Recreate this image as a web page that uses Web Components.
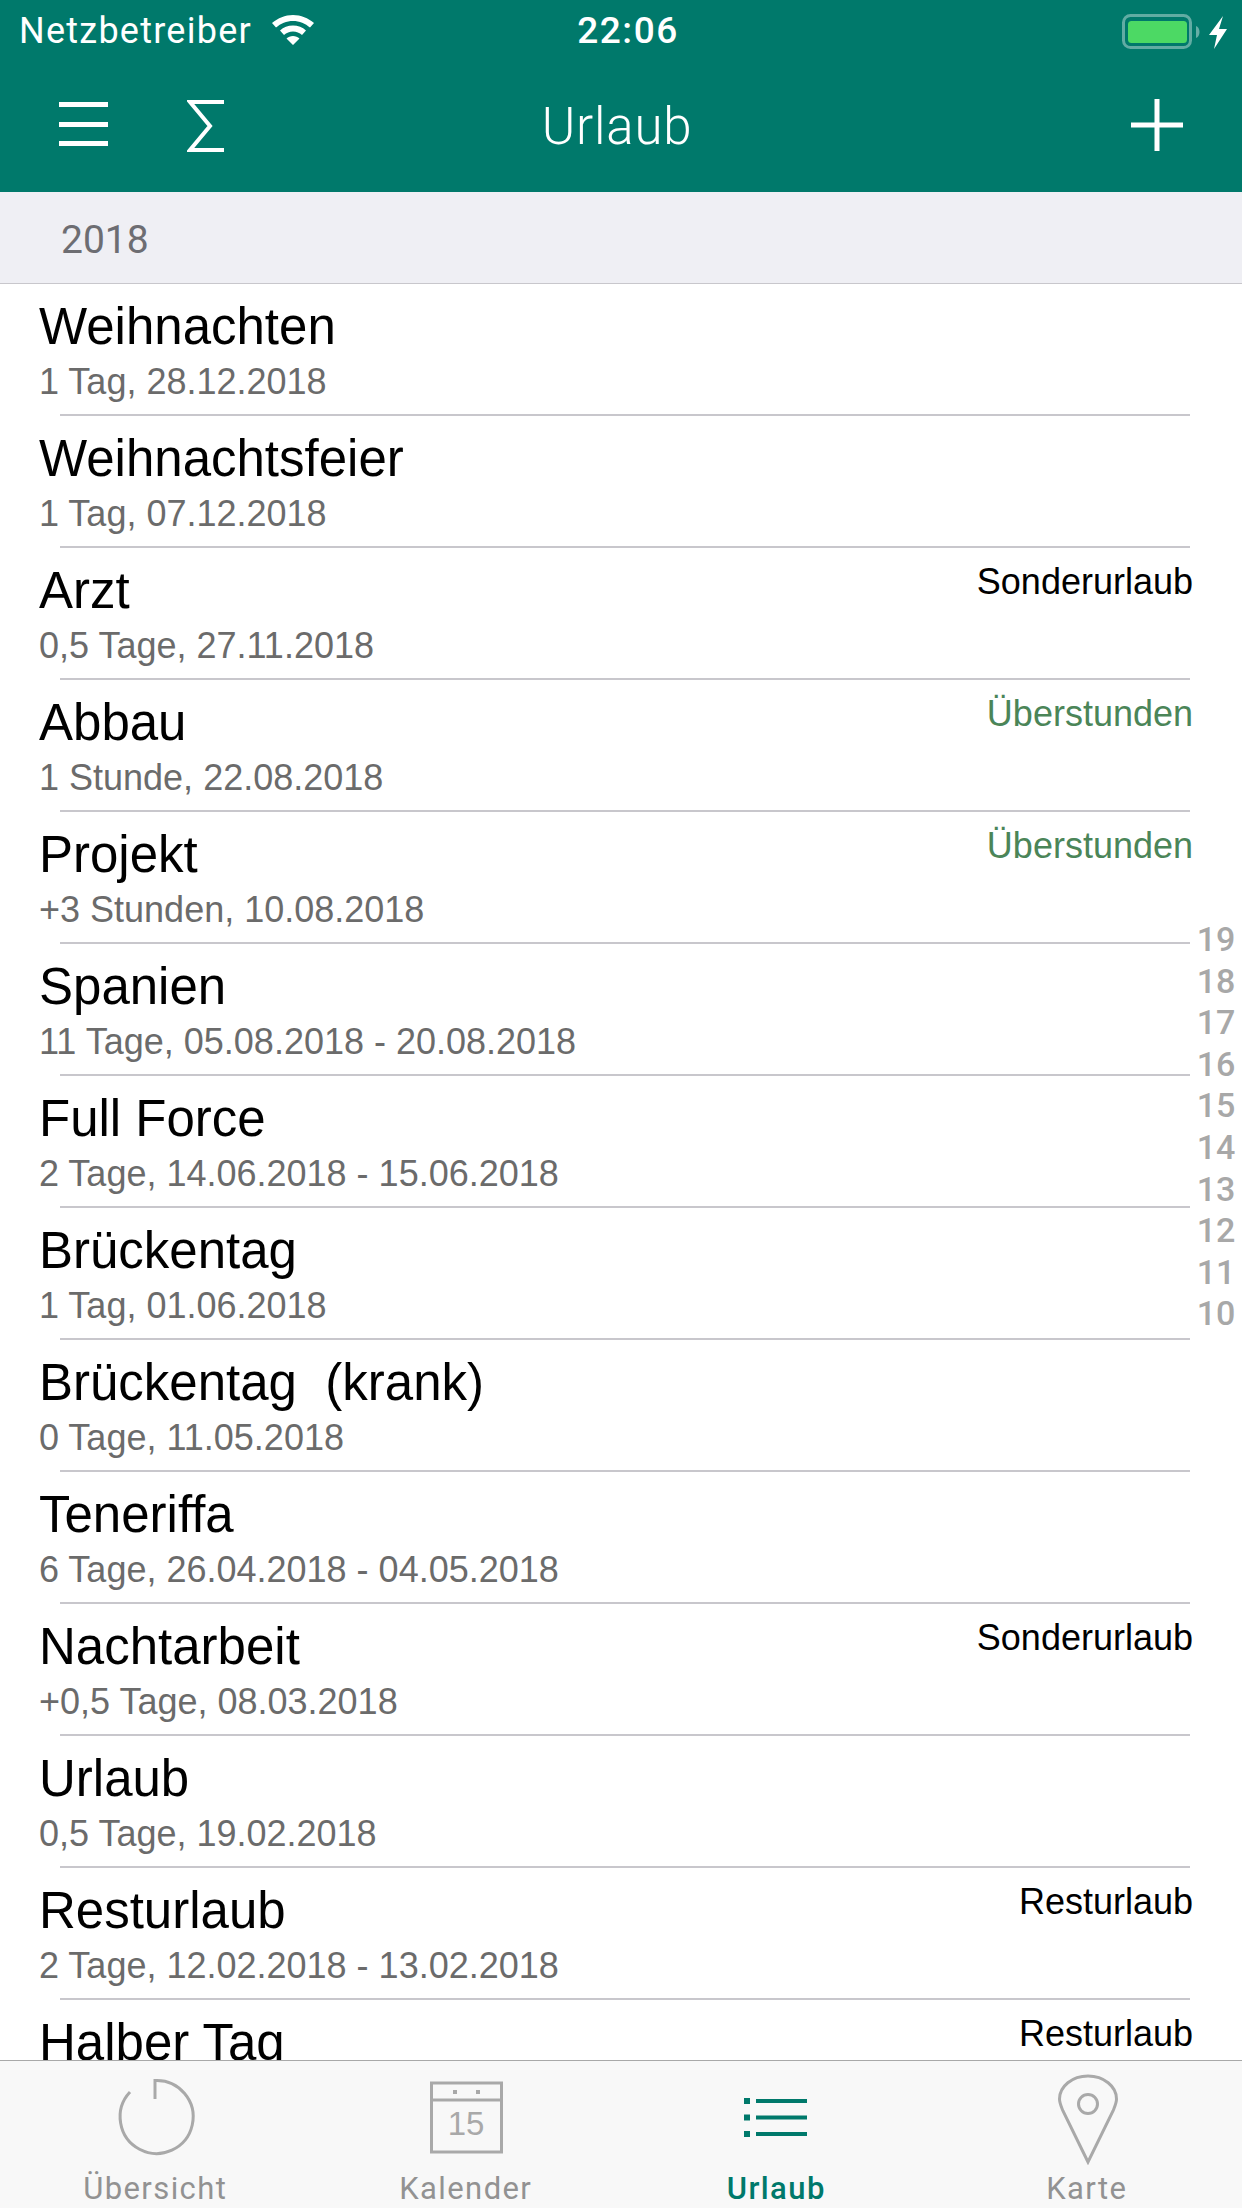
<!doctype html>
<html lang="de"><head><meta charset="utf-8">
<style>
html,body{margin:0;padding:0;background:#fff}
body{width:1242px;height:2208px;overflow:hidden;font-family:"Liberation Sans",sans-serif}
</style></head><body>
<app-shell>
  <status-bar slot="top"></status-bar>
  <nav-bar slot="top" title="Urlaub"></nav-bar>
  <section-head slot="top">2018</section-head>
  <leave-row t="Weihnachten" s="1 Tag, 28.12.2018"></leave-row>
  <leave-row t="Weihnachtsfeier" s="1 Tag, 07.12.2018"></leave-row>
  <leave-row t="Arzt" s="0,5 Tage, 27.11.2018" tag="Sonderurlaub"></leave-row>
  <leave-row t="Abbau" s="1 Stunde, 22.08.2018" tag="Überstunden" green></leave-row>
  <leave-row t="Projekt" s="+3 Stunden, 10.08.2018" tag="Überstunden" green></leave-row>
  <leave-row t="Spanien" s="11 Tage, 05.08.2018 - 20.08.2018"></leave-row>
  <leave-row t="Full Force" s="2 Tage, 14.06.2018 - 15.06.2018"></leave-row>
  <leave-row t="Brückentag" s="1 Tag, 01.06.2018"></leave-row>
  <leave-row t="Brückentag  (krank)" s="0 Tage, 11.05.2018"></leave-row>
  <leave-row t="Teneriffa" s="6 Tage, 26.04.2018 - 04.05.2018"></leave-row>
  <leave-row t="Nachtarbeit" s="+0,5 Tage, 08.03.2018" tag="Sonderurlaub"></leave-row>
  <leave-row t="Urlaub" s="0,5 Tage, 19.02.2018"></leave-row>
  <leave-row t="Resturlaub" s="2 Tage, 12.02.2018 - 13.02.2018" tag="Resturlaub"></leave-row>
  <leave-row t="Halber Tag" s="" tag="Resturlaub"></leave-row>
  <year-index slot="over"></year-index>
  <tab-bar slot="bottom"></tab-bar>
</app-shell>
<script>
const def=(name,css,html)=>{customElements.define(name,class extends HTMLElement{
  connectedCallback(){ if(this.shadowRoot)return; const r=this.attachShadow({mode:"open"});
    r.innerHTML=`<style>${css}</style>${typeof html==="function"?html(this):html}`; }
});};
def("app-shell",`
:host{display:flex;flex-direction:column;width:1242px;height:2208px;overflow:hidden}
.list{position:relative;flex:1;min-height:0;overflow:hidden}
.over{position:absolute;inset:0;pointer-events:none}
`,`<slot name="top"></slot><div class="list"><slot></slot><div class="over"><slot name="over"></slot></div></div><slot name="bottom"></slot>`);
def("status-bar",`
:host{display:flex;align-items:center;height:64px;background:#00796b;color:#fff;position:relative;font-family:Roboto,sans-serif}
.l{display:flex;align-items:center;padding-left:19px;font-size:36px;line-height:40px;gap:20px;flex:1;letter-spacing:1.250px;margin-top:-2px}
.c{position:absolute;left:0;right:0;text-align:center;top:11px;font-size:37px;line-height:40px;font-weight:500;padding-left:14px;letter-spacing:1.500px}
.r{display:flex;align-items:center;padding-right:15px}
svg{display:block}
.l svg{margin-top:-3px}
`,`<div class="l"><span>Netzbetreiber</span>
<svg width="42" height="30" viewBox="0 0 42 30"><path fill="#fff" d="M21 0C13 0 6 3 0 8l4 4.600C8.700 8.500 14.500 6 21 6s12.300 2.500 17 6.600L42 8C36 3 29 0 21 0zM21 10.500c-5 0-9.500 1.800-13 5l4 4.500c2.500-2.200 5.500-3.500 9-3.500s6.500 1.300 9 3.500l4-4.500c-3.500-3.200-8-5-13-5zM21 21c-2.500 0-4.800.9-6.500 2.500L21 30l6.500-6.500C25.800 21.900 23.500 21 21 21z"/></svg></div>
<div class="c">22:06</div>
<div class="r"><svg width="105" height="36" viewBox="0 0 105 36">
<rect x="1.500" y="1.500" width="67" height="32" rx="7" fill="none" stroke="#fff" stroke-opacity=".38" stroke-width="3"/>
<rect x="6" y="7" width="59" height="22" rx="3.500" fill="#4cd964"/>
<path d="M74 12c2 .6 3.500 3 3.500 6s-1.500 5.400-3.500 6z" fill="#fff" fill-opacity=".4"/>
<path d="M101 2 87 21h8l-3 14 13-20h-8z" fill="#fff"/></svg></div>`);
def("nav-bar",`
:host{display:block;height:128px;background:#00796b;color:#fff;position:relative}
.row{display:flex;align-items:flex-start;height:100%}
.h{margin:38px 0 0 59px;width:49px;height:44px;display:flex;flex-direction:column;justify-content:space-between}
.h i{display:block;height:5px;background:#fff}
.s{margin:35px 0 0 79px;display:block}
.t{position:absolute;left:0;right:0;top:29px;text-align:center;font:300 51px/68px Roboto,sans-serif;margin-left:-8px;letter-spacing:.8px}
.p{margin:35px 0 0 auto;margin-right:59px;display:block}
`,h=>`<div class="row"><div class="h"><i></i><i></i><i></i></div>
<svg class="s" width="38" height="54" viewBox="0 0 38 54"><path d="M37 3H3l20 24L3 51h34" fill="none" stroke="#fff" stroke-width="4"/></svg>
<div class="t">${h.getAttribute("title")}</div>
<svg class="p" width="52" height="52" viewBox="0 0 52 52"><path d="M23.500 0h5v23.500H52v5H28.500V52h-5V28.500H0v-5h23.500z" fill="#fff"/></svg></div>`);
def("section-head",`
:host{display:flex;align-items:center;height:91px;background:#efeff4;border-bottom:1.500px solid #c8c7cc;color:#6d6d72;padding-left:61px;font:400 39px Roboto,sans-serif}
span{position:relative;top:2px}
`,`<span><slot></slot></span>`);
def("leave-row",`
:host{display:block;height:132px;position:relative;overflow:hidden}
.wrap{display:flex;justify-content:space-between;height:130px;padding:0 49px 0 39px;box-sizing:border-box}
.t{font-size:51px;line-height:56px;margin-top:15px;color:#000;white-space:pre}
.s{font-size:36px;line-height:38px;margin-top:8px;color:#6b6b6b;white-space:pre}
.tag{font-size:36px;line-height:38px;margin-top:15px;color:#000}
.g{color:#4b8558}
.sep{height:1.500px;background:#c8c7cc;margin:0 52px 0 60px}
`,h=>`<div class="wrap"><div><div class="t">${h.getAttribute("t")}</div><div class="s">${h.getAttribute("s")}</div></div>
${h.getAttribute("tag")?`<div class="tag ${h.hasAttribute("green")?"g":""}">${h.getAttribute("tag")}</div>`:""}</div><div class="sep"></div>`);
def("year-index",`
:host{display:block;position:absolute;right:6px;top:635px;width:40px;color:#a8a8a8;font:500 34px/41.600px Roboto,sans-serif;text-align:center}
div{height:41.600px}
`,[19,18,17,16,15,14,13,12,11,10].map(n=>`<div>${n}</div>`).join(""));
const G="#a9a9a9",T="#00796b";
def("tab-bar",`
:host{display:grid;grid-template-columns:repeat(4,1fr);height:148px;box-sizing:border-box;background:#f8f8f8;border-top:1.500px solid #a8a8a8;position:relative;z-index:1}
.tab{display:flex;flex-direction:column;align-items:center;color:#929292;font:400 31px/34px Roboto,sans-serif;letter-spacing:1.400px}
.tab.on{color:${T};font-weight:500}
svg{display:block;margin-top:12px;margin-bottom:7px}
text{font-family:"Liberation Sans",sans-serif;letter-spacing:0}
`,`
<div class="tab"><svg width="100" height="92" viewBox="0 0 100 92"><path d="M25 19A36.500 36.500 0 1 0 50 7.500V26" fill="none" stroke="${G}" stroke-width="3"/></svg>Übersicht</div>
<div class="tab"><svg width="100" height="92" viewBox="0 0 100 92"><path d="M15.500 10h70v69h-70zM15.500 27h70" fill="none" stroke="${G}" stroke-width="3"/><rect x="37" y="17" width="4" height="4" fill="${G}"/><rect x="60" y="17" width="4" height="4" fill="${G}"/><text x="50" y="62" text-anchor="middle" font-size="33" fill="${G}">15</text></svg>Kalender</div>
<div class="tab on"><svg width="100" height="92" viewBox="0 0 100 92"><path d="M18 25h6v6h-6zM18 41.500h6v6h-6zM18 58h6v6h-6z" fill="${T}"/><path d="M30 28h51M30 44.500h51M30 61h51" stroke="${T}" stroke-width="4" fill="none"/></svg>Urlaub</div>
<div class="tab"><svg width="100" height="92" viewBox="0 0 100 92"><path d="M51 89 26 38C24 33 22.500 30 22.500 26A28.500 23 0 0 1 79.500 26C79.500 30 78 33 76 38z" fill="none" stroke="${G}" stroke-width="3"/><circle cx="51" cy="31" r="9.500" fill="none" stroke="${G}" stroke-width="3"/></svg>Karte</div>`);
</script>
</body></html>
